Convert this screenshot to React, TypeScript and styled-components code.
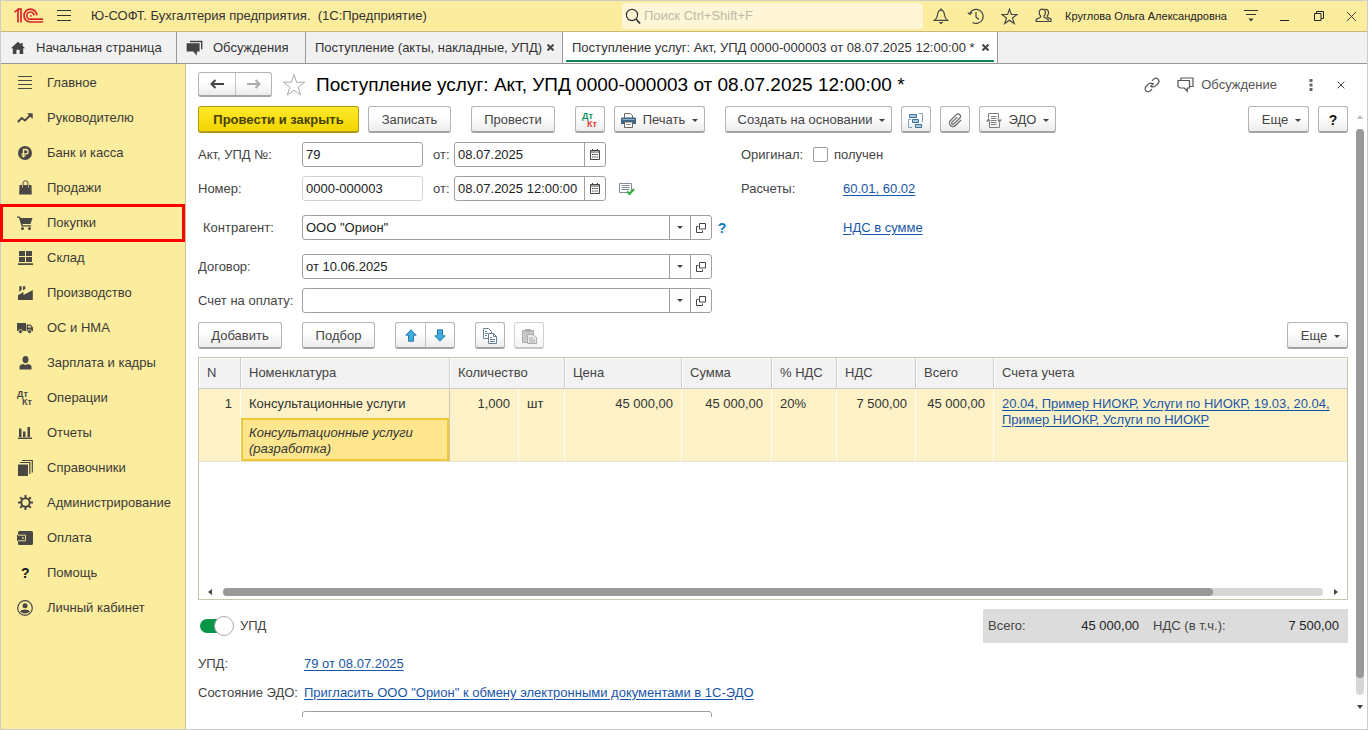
import React from "react";
import styled, { createGlobalStyle, css } from "styled-components";

const GlobalStyle = createGlobalStyle`
  *, *::before, *::after { box-sizing: border-box; }
  body { margin: 0; }
  body, button, input {
    font-family: "Liberation Sans", Arial, sans-serif;
    font-size: 13px;
    line-height: 16px;
    color: #444;
  }
  button { cursor: pointer; }
  svg { display: block; flex: none; }
`;

/* ---------- frame ---------- */

const Window = styled.div`
  display: flex;
  flex-direction: column;
  height: 100vh;
  border: 1px solid #ccc;
  background: #fff;
`;

const TitleBar = styled.header`
  display: flex;
  align-items: center;
  flex: none;
  height: 31px;
  padding: 0 1px 0 13px;
  background: #fbec9e;
  border-bottom: 1px solid #c9b878;
`;

const AppTitle = styled.div`
  flex: 1;
  min-width: 0;
  padding-left: 7px;
  color: #333;
  white-space: pre;
  overflow: hidden;
`;

const IconButton = styled.button<{ $w?: number }>`
  display: flex;
  align-items: center;
  justify-content: center;
  width: ${(p) => p.$w ?? 34}px;
  height: 28px;
  padding: 0;
  border: 0;
  background: none;
  color: #444;
  flex: none;
`;

const SearchBox = styled.label`
  display: flex;
  align-items: center;
  gap: 3px;
  width: 301px;
  height: 26px;
  padding-left: 3px;
  background: #fef6d6;
  border-radius: 3px;
  margin-right: 1px;
`;

const SearchInput = styled.input`
  flex: 1;
  min-width: 0;
  border: 0;
  padding: 0;
  background: none;
  outline: none;
  &::placeholder { color: #bdb9a8; opacity: 1; }
`;

const UserLink = styled.button`
  flex: none;
  width: 174px;
  padding: 0 0 0 5px;
  border: 0;
  background: none;
  font-size: 11px;
  color: #222;
  text-align: left;
  white-space: nowrap;
`;

/* ---------- tabs ---------- */

const TabBar = styled.nav`
  display: flex;
  flex: none;
  height: 32px;
  background: #f1f1f1;
  border-bottom: 1px solid #999;
`;

const Tab = styled.div<{ $active?: boolean; $w: number }>`
  position: relative;
  display: flex;
  align-items: center;
  min-width: ${(p) => p.$w}px;
  padding: 0 7px 0 9px;
  border-right: 1px solid #999;
  background: ${(p) => (p.$active ? "#fff" : "transparent")};
  ${(p) =>
    p.$active &&
    css`
      &::after {
        content: "";
        position: absolute;
        left: 3px;
        right: 3px;
        bottom: 1px;
        height: 2px;
        background: #128354;
      }
    `}
`;

const TabLabel = styled.button`
  display: flex;
  align-items: center;
  gap: 10px;
  flex: 1;
  padding: 0;
  border: 0;
  background: none;
  color: #333;
  white-space: nowrap;
`;

const TabClose = styled.button`
  padding: 0;
  border: 0;
  width: 10px;
  background: none;
  color: #444;
  display: flex;
  justify-content: center;
`;

/* ---------- side menu ---------- */

const Body = styled.div`
  display: flex;
  flex: 1;
  min-height: 0;
`;

const Sidebar = styled.nav`
  flex: none;
  width: 185px;
  padding-top: 1px;
  background: #fbec9e;
  border-right: 1px solid #c9c2a0;
`;

const MenuItem = styled.a<{ $marked?: boolean }>`
  position: relative;
  display: flex;
  align-items: center;
  gap: 14px;
  height: 35px;
  padding-left: 16px;
  color: #3b3a36;
  text-decoration: none;
  white-space: nowrap;
  ${(p) =>
    p.$marked &&
    css`
      &::after {
        content: "";
        position: absolute;
        inset: -1px 0 -2px -1px;
        border: 3px solid #f00;
      }
    `}
`;

const IconSlot = styled.span`
  display: flex;
  justify-content: center;
  width: 16px;
  color: #4a4844;
`;

/* ---------- document ---------- */

const Main = styled.main`
  display: flex;
  flex-direction: column;
  flex: 1;
  min-width: 0;
  padding: 8px 3px 12px 12px;
`;

const DocHeader = styled.div`
  display: flex;
  align-items: center;
  flex: none;
  height: 25px;
  margin-bottom: 9px;
  padding-right: 10px;
`;

const raised = css`
  border: 1px solid #b3b3b3;
  border-bottom: 2px solid #a3a3a3;
  border-radius: 3px;
  background: linear-gradient(#fff 40%, #ececec);
  color: #444;
`;

const SplitGroup = styled.div<{ $h: number }>`
  ${raised}
  display: flex;
  height: ${(p) => p.$h}px;
`;

const SplitButton = styled.button<{ $w: number }>`
  display: flex;
  align-items: center;
  justify-content: center;
  width: ${(p) => p.$w}px;
  padding: 0;
  border: 0;
  background: none;
  & + & { border-left: 1px solid #c4c4c4; }
`;

const DocTitle = styled.h1`
  flex: 1;
  margin: 0;
  font-size: 19px;
  line-height: 24px;
  font-weight: 400;
  color: #000;
  white-space: nowrap;
`;

const DiscussButton = styled.button`
  display: flex;
  align-items: center;
  gap: 7px;
  padding: 0;
  margin: 0 17px 0 8px;
  border: 0;
  background: none;
  color: #555;
`;

const Work = styled.div`
  display: flex;
  flex: 1;
  min-height: 0;
`;

const Form = styled.form`
  display: flex;
  flex-direction: column;
  flex: 1;
  min-width: 0;
  overflow: hidden;
`;

const Toolbar = styled.div`
  display: flex;
  flex: none;
  gap: 20px;
  height: 28px;
`;

const ToolGroup = styled.div<{ $end?: boolean }>`
  display: flex;
  gap: 9px;
  height: 27px;
  margin-left: ${(p) => (p.$end ? "auto" : "0")};
`;

const Button = styled.button<{ $w: number; $primary?: boolean; $menu?: boolean }>`
  ${raised}
  display: flex;
  align-items: center;
  justify-content: center;
  gap: 7px;
  width: ${(p) => p.$w}px;
  height: 27px;
  padding: 2px 0 0 ${(p) => (p.$menu ? 6 : 0)}px;
  white-space: nowrap;
  ${(p) =>
    p.$primary &&
    css`
      border-color: #b09a10;
      background: linear-gradient(#ffe92b, #f2d500);
      color: #463f00;
      font-weight: 700;
    `}
  &:disabled { opacity: 0.6; cursor: default; }
`;

const QuestionMark = styled.b`
  font-size: 14px;
  color: #111;
`;

const Caret = styled.span`
  border: 3px solid transparent;
  border-top-color: #444;
  border-bottom: 0;
`;

const Fields = styled.div`
  display: flex;
  flex-direction: column;
  gap: 9px;
  flex: none;
  padding: 8px 0 9px;
`;

const FieldBlock = styled.div`
  padding: 5px 0;
`;

const Row = styled.div`
  display: flex;
  align-items: center;
  height: 25px;
`;

const RowMain = styled.div`
  display: flex;
  align-items: center;
  width: 543px;
`;

const Label = styled.label<{ $w: number; $indent?: boolean }>`
  flex: none;
  width: ${(p) => p.$w}px;
  padding-left: ${(p) => (p.$indent ? 5 : 0)}px;
  white-space: nowrap;
`;

const FieldFrame = styled.div<{ $w: number; $readonly?: boolean }>`
  display: flex;
  flex: none;
  width: ${(p) => p.$w}px;
  height: 25px;
  border: 1px solid ${(p) => (p.$readonly ? "#d2d2d2" : "#a0a0a0")};
  border-radius: 3px;
  background: #fff;
`;

const TextInput = styled.input`
  flex: 1;
  min-width: 0;
  padding: 0 3px;
  border: 0;
  background: none;
  outline: none;
  color: #222;
`;

const FieldButton = styled.button`
  display: flex;
  align-items: center;
  justify-content: center;
  width: 21px;
  padding: 0;
  border: 0;
  border-left: 1px solid #a0a0a0;
  background: none;
`;

const FromLabel = styled.label`
  width: 31px;
  padding-left: 10px;
`;

const PostedMark = styled.span`
  margin-left: 13px;
`;

const Link = styled.a`
  color: #1a56a8;
  text-decoration: underline;
  text-underline-offset: 2px;
`;

const HelpLink = styled.button`
  margin-left: 5px;
  padding: 0;
  width: 10px;
  border: 0;
  background: none;
  color: #0d78b8;
  font-size: 14px;
  font-weight: 700;
`;

const CheckBox = styled.input`
  appearance: none;
  width: 15px;
  height: 15px;
  margin: 0 6px 0 0;
  border: 1px solid #999;
  border-radius: 2px;
  background: #fff;
`;

/* ---------- table ---------- */

const TableFrame = styled.div`
  display: flex;
  flex-direction: column;
  flex: none;
  min-height: 243px;
  margin-top: 7px;
  border: 1px solid #c8c6ae;
`;

const Grid = styled.table`
  width: 100%;
  table-layout: fixed;
  border-collapse: separate;
  border-spacing: 0;
`;

const Th = styled.th`
  height: 31px;
  padding: 0 8px 1px;
  background: #f2f2f2;
  border-right: 1px solid #ccc;
  border-bottom: 1px solid #ccc;
  box-shadow: inset 1px 1px 0 #fff;
  font-weight: 400;
  text-align: left;
  white-space: nowrap;
  &:last-child { border-right: 0; }
`;

const Td = styled.td<{ $right?: boolean }>`
  padding: 7px 8px 6px;
  vertical-align: top;
  background: #fdf2c7;
  border-right: 1px solid #fffdf4;
  border-bottom: 1px solid #e9e2cc;
  color: #333;
  text-align: ${(p) => (p.$right ? "right" : "left")};
  overflow: hidden;
  &:last-child { border-right: 0; }
`;

const NameTd = styled(Td)`
  height: 29px;
  border-bottom: 0;
  border-right-color: #cfc9b4;
  white-space: nowrap;
`;

const ContentTd = styled(Td)`
  height: 44px;
  padding: 0;
  &:last-child { border-right: 1px solid #cfc9b4; }
`;

const SelectedCell = styled.div`
  height: 43px;
  padding: 5px 6px;
  border: 2px solid #f0c938;
  background: #fde68e;
  font-style: italic;
`;

const HScroll = styled.div`
  display: flex;
  align-items: center;
  gap: 11px;
  height: 15px;
  margin-top: auto;
  padding: 0 9px;
`;

const Track = styled.div<{ $vertical?: boolean }>`
  display: flex;
  flex: 1;
  flex-direction: ${(p) => (p.$vertical ? "column" : "row")};
  ${(p) => (p.$vertical ? "width: 8px;" : "height: 8px;")}
  border-radius: 4px;
  background: #d6d6d6;
`;

const Thumb = styled.div<{ $size: string }>`
  flex: 0 0 ${(p) => p.$size};
  border-radius: 4px;
  background: #999;
`;

const VScroll = styled.div`
  display: flex;
  flex-direction: column;
  align-items: center;
  gap: 10px;
  width: 8px;
  margin-left: 8px;
  padding: 9px 0 8px;
`;

const Arrow = styled.span<{ $dir: "up" | "down" | "left" | "right"; $faint?: boolean }>`
  width: 0;
  height: 0;
  border: 3px solid transparent;
  ${(p) => {
    const side = { up: "bottom", down: "top", left: "right", right: "left" }[p.$dir];
    const other = { up: "top", down: "bottom", left: "left", right: "right" }[p.$dir];
    return `border-${side}: 4px solid ${p.$faint ? "#bbb" : "#444"}; border-${other}-width: 0;`;
  }}
`;

/* ---------- footer ---------- */

const SummaryRow = styled.div`
  display: flex;
  align-items: center;
  justify-content: space-between;
  flex: none;
  height: 34px;
  margin: 9px 0 8px;
`;

const SwitchLabel = styled.label`
  display: flex;
  align-items: center;
  gap: 7px;
  padding-left: 2px;
`;

const Switch = styled.input`
  appearance: none;
  position: relative;
  width: 33px;
  height: 14px;
  margin: 0;
  border-radius: 7px;
  background: #0a9648;
  &::after {
    content: "";
    position: absolute;
    right: -1px;
    top: -3px;
    width: 20px;
    height: 20px;
    border: 1px solid #aaa;
    border-radius: 50%;
    background: #fff;
  }
`;

const Totals = styled.dl`
  display: flex;
  align-items: center;
  width: 365px;
  height: 34px;
  margin: 0;
  padding: 0 9px 0 5px;
  background: #dcdcdc;
  white-space: nowrap;
`;

const TotalValue = styled.dd`
  flex: 1;
  margin: 0;
  text-align: right;
  color: #222;
  & + dt { margin-left: 14px; }
`;

const InfoRow = styled.div`
  display: flex;
  align-items: center;
  flex: none;
  height: 25px;
  margin-bottom: 4px;
`;

const Comment = styled.div`
  flex: none;
  margin: 2px 0 0 104px;
  height: 25px;
`;

/* ---------- icons ---------- */

const stroke = { fill: "none", stroke: "currentColor", strokeWidth: 1.2 } as const;

const Logo = () => (
  <svg width="30" height="16" viewBox="0 0 30 16" fill="none" stroke="#d9262c" strokeWidth="1.7">
    <path d="M.4 4.2 4 1.400v13M3.800 1.200h3.200v13.200" />
    <path d="M22.800 7.400A6.400 6.400 0 1 0 16.400 14H29.200" />
    <path d="M20 7.400a3.600 3.600 0 1 0-3.600 3.800H29.200" />
    <path d="M16.200 7.800h1.400" />
  </svg>
);

const Burger = () => (
  <svg width="14" height="12" viewBox="0 0 14 12" stroke="#333" strokeWidth="1">
    <path d="M0 .5h14M0 5.500h14M0 10.500h14" />
  </svg>
);

const SearchIcon = () => (
  <svg width="16" height="17" viewBox="0 0 16 17" {...stroke} stroke="#333">
    <circle cx="7" cy="7" r="5.6" />
    <path d="m11 11 4 4.500" strokeWidth="1.8" />
  </svg>
);

const Bell = () => (
  <svg width="16" height="18" viewBox="0 0 16 18" {...stroke}>
    <path d="M8 1.200v1.600M8 2.800C5 3.200 4.700 5.600 4.500 8 4.300 10.500 3.200 12 1.400 13.400h13.200C12.800 12 11.700 10.500 11.500 8 11.300 5.600 11 3.200 8 2.800Z" />
    <path d="M5.600 15h4.800L8 17.200Z" fill="currentColor" stroke="none" />
  </svg>
);

const History = () => (
  <svg width="17" height="17" viewBox="0 0 17 17" {...stroke}>
    <path d="M3 5A7 7 0 1 1 5.500 14.400" />
    <path d="M.8 4.500 3 6.400 5 4" />
    <path d="M9 4v5l3 2.500" />
  </svg>
);

const STAR = "m12 1.500 2.600 7.700h8.200l-6.600 4.900 2.500 7.900L12 17.200 5.300 22l2.500-7.900L1.200 9.200h8.200Z";

const StarIcon = ({ size, color, width }: { size: number; color: string; width: number }) => (
  <svg width={size} height={size} viewBox="0 0 24 24" fill="none" stroke={color} strokeWidth={width}>
    <path d={STAR} />
  </svg>
);

const People = () => (
  <svg width="17" height="16" viewBox="0 0 17 16" {...stroke}>
    <path d="M7.200 1.200c-2 0-3 1.400-3 3.200 0 1.500.6 2.800 1.400 3.500v1.300L1.200 11.400V13.500h12V11.400L9 9.200V7.900c.8-.7 1.400-2 1.400-3.500 0-1.800-1.200-3.200-3.200-3.200Z" />
    <path d="M9.800 1.400c2.400-.4 3.700 1 3.700 3 0 1.500-.5 2.600-1.300 3.400v1.200l3.800 2.200v2.300h-2" />
  </svg>
);

const PanelMenu = () => (
  <svg width="16" height="14" viewBox="0 0 16 14" stroke="#333">
    <path d="M1 1.500h14M3 5.500h10" />
    <path d="M5.500 9.500h5L8 12.500Z" fill="#333" stroke="none" />
  </svg>
);

const Minimize = () => (
  <svg width="10" height="12" viewBox="0 0 10 12" stroke="#222"><path d="M0 10.500h9" /></svg>
);

const Restore = () => (
  <svg width="10" height="10" viewBox="0 0 10 10" fill="none" stroke="#222">
    <path d="M.5 2.500h6.500v7H.5ZM2.500 2.500v-2h7v7H7" />
  </svg>
);

const Cross = ({ size, width = 1 }: { size: number; width?: number }) => (
  <svg width={size} height={size} viewBox="0 0 10 10" stroke="#444" strokeWidth={(width * 10) / size}>
    <path d="m.8.8 8.400 8.400M9.200.8.8 9.200" />
  </svg>
);

const Home = () => (
  <svg width="16" height="14" viewBox="0 0 16 14" fill="#444">
    <path d="M8 .8.8 7.200h2v5.800h3.600V8.800h3.200V13h3.600V7.200h2L12.600 4.800V2h-1.800v1.300Z" />
  </svg>
);

const ChatFilled = () => (
  <svg width="17" height="16" viewBox="0 0 17 16" fill="#444">
    <path d="M4 .8h12.400v8.400H15V2.300H4Z" />
    <path d="M.6 3.200h13v8.400H11L10.600 15.400 7.200 11.600H.6Z" />
  </svg>
);

const Chat = () => (
  <svg width="17" height="16" viewBox="0 0 17 16" {...stroke} stroke="#555">
    <path d="M1 3.500h11.500v7.500h-2.200v3.200L7.300 11H3.200L1 9.500Z" />
    <path d="M4 3.200V1h12v8.500h-3" />
  </svg>
);

const ChainLink = () => (
  <svg width="16" height="16" viewBox="0 0 24 24" fill="none" stroke="#555" strokeWidth="1.800">
    <path d="M10.500 13.500a5 5 0 0 0 6.500.2l4-4a4.500 4.500 0 0 0-6.500-6.400l-2.600 2.500" />
    <path d="M13.500 10.500a5 5 0 0 0-6.500-.2l-4 4a4.500 4.500 0 0 0 6.500 6.400l2.600-2.500" />
    <path d="m9.500 14.500 5-5" />
  </svg>
);

const ArrowIcon = ({ flip }: { flip?: boolean }) => (
  <svg width="14" height="10" viewBox="0 0 14 10" fill="none" stroke={flip ? "#aaa" : "#444"} strokeWidth="2">
    <path d={flip ? "M0 5h12M8.500 1l4 4-4 4" : "M14 5H2M5.500 1l-4 4 4 4"} />
  </svg>
);

const BlueArrow = ({ down }: { down?: boolean }) => (
  <svg width="12" height="13" viewBox="0 0 12 13" fill="#3fabe0" stroke="#2a7ba8">
    <path d={down ? "M6 12.300 11.200 6.800H8.500V.8h-5v6H.8Z" : "M6 .7.8 6.200h2.700v6h5v-6h2.700Z"} />
  </svg>
);

const DtKt = ({ colored }: { colored?: boolean }) => (
  <svg width="18" height="18" viewBox="0 0 18 18" fontFamily="Liberation Sans, Arial, sans-serif" fontSize="9" fontWeight="700">
    <text x="1" y="8" fill={colored ? "#12925a" : "#4a4844"}>Дт</text>
    <text x="6" y="16" fill={colored ? "#d9413c" : "#4a4844"}>Кт</text>
  </svg>
);

const Printer = () => (
  <svg width="15" height="15" viewBox="0 0 15 15">
    <path d="M3.500 5V.6h6L11.500 2.600V5" fill="#fff" stroke="#666" />
    <path d="M0 5.500Q0 4.500 1 4.500h13q1 0 1 1V11H0Z" fill="#3e6486" />
    <path d="M1.500 6.500h12" stroke="#8fb0cc" />
    <path d="M3.500 9h8v5.500h-8Z" fill="#fff" stroke="#666" />
    <path d="M5 11.500h5" stroke="#999" />
  </svg>
);

const Structure = () => (
  <svg width="16" height="15" viewBox="0 0 16 15" fill="#a9cbe6" stroke="#3f7396">
    <path d="M1.500 1.500h7v3h-7ZM4.500 6.500h6v3h-6ZM7.500 11.500h6v3h-6Z" />
    <path d="M11 .5h3.500V9M3 6.500H.5V14.500H4" fill="none" stroke="#7fa3bd" />
  </svg>
);

const Clip = () => (
  <svg width="15" height="15" viewBox="0 0 24 24" fill="none" stroke="#666" strokeWidth="1.900">
    <path d="m21 11-9 9a5.600 5.600 0 0 1-8-8l9.500-9.500a3.900 3.900 0 0 1 5.500 5.500l-9.500 9.500a2 2 0 0 1-3-3L15 6.500" />
  </svg>
);

const Exchange = () => (
  <svg width="16" height="15" viewBox="0 0 16 15" fill="none" stroke="#808080">
    <path d="M2.500 5V.5h10V6M13.500 10v4.500h-10V9M5 3.500h5.500M5 5.500h5.500M5 7.500h5.500M5 9.500h5.500M5 11.500h5.500" />
    <path d="M0 8.500 2.500 5l2.500 3.500ZM11 6.500h5L13.500 10Z" fill="#808080" stroke="none" />
  </svg>
);

const Calendar = () => (
  <svg width="10" height="11" viewBox="0 0 10 11" fill="none" stroke="#444">
    <path d="M.5 1.500h9v9h-9ZM.5 3h9" />
    <path d="M2.500 0v2M7.500 0v2M2 5.500h1.500M4.300 5.500h1.500M6.600 5.500h1.500M2 8h1.500M4.300 8h1.500M6.600 8h1.500" />
  </svg>
);

const OpenIcon = () => (
  <svg width="10" height="10" viewBox="0 0 10 10" fill="none" stroke="#444">
    <path d="M3.500.5h6v5.500h-6Z" />
    <path d="M2.500 3.500h-2v6h6v-2" />
  </svg>
);

const Posted = () => (
  <svg width="16" height="14" viewBox="0 0 16 14" fill="none" stroke="#7f8c99">
    <path d="M.5 1.500h12v9H.5Z" fill="#fff" />
    <path d="M2.500 3.500h8M2.500 5.500h8M2.500 7.500h8" />
    <path d="m8 9.500 2.500 2.500 4.500-5" stroke="#2fae3c" strokeWidth="2.200" />
  </svg>
);

const CopyIcon = () => (
  <svg width="16" height="16" viewBox="0 0 16 16" fill="#fff" stroke="#6a7f92">
    <path d="M1.500.5h5l3 3v7h-8Z" />
    <path d="M6.500 5.500h5l3 3v7h-8Z" />
    <path d="M11.500 5.500v3h3M3 3.500h2M3 5.500h3M3 7.500h2M8 9.500h2M8 11.500h5M8 13.500h5" fill="none" />
  </svg>
);

const PasteIcon = () => (
  <svg width="15" height="15" viewBox="0 0 15 15" stroke="#777">
    <path d="M.5 1.500h11v12H.5Z" fill="#a5a5a5" />
    <path d="M3.500.5h5v2h-5Z" fill="#777" />
    <path d="M5.500 5.500h5l4 3v6h-9Z" fill="#ddd" />
    <path d="M7 9h4M7 11h6M7 13h6" />
  </svg>
);

const menuIcons: Record<string, React.ReactNode> = {
  main: (
    <svg width="14" height="14" viewBox="0 0 14 14" stroke="currentColor"><path d="M0 .5h14M0 4.500h14M0 8.500h14M0 12.500h14" /></svg>
  ),
  trend: (
    <svg width="16" height="10" viewBox="0 0 16 10" fill="none" stroke="currentColor" strokeWidth="2">
      <path d="m.8 9 4-4L8 7.500l5-5" /><path d="M10 .3h5.700V6Z" fill="currentColor" stroke="none" />
    </svg>
  ),
  ruble: (
    <svg width="14" height="14" viewBox="0 0 14 14">
      <circle cx="7" cy="7" r="7" fill="currentColor" />
      <path d="M5.500 11.500v-8H8q2 0 2 2.200t-2 2.200H3.500M3.500 9.800h4" fill="none" stroke="#fbec9e" strokeWidth="1.300" />
    </svg>
  ),
  bag: (
    <svg width="13" height="15" viewBox="0 0 13 15">
      <path d="M.5 5h12l.3 9.500H.2Z" fill="currentColor" />
      <path d="M4 7.500V3.200Q4 .8 6.500.8T9 3.200v4.300" fill="none" stroke="currentColor" />
      <path d="M3.500 5v2.500M9.500 5v2.500" stroke="#fbec9e" strokeWidth=".7" />
    </svg>
  ),
  cart: (
    <svg width="16" height="14" viewBox="0 0 16 14" fill="currentColor">
      <path d="M0 .5h3l.6 1.500h12L13.500 8H5.400l.4 1.200h8.400v1.300H4.600L2 1.800H0Z" />
      <circle cx="5.500" cy="12.500" r="1.500" /><circle cx="12.500" cy="12.500" r="1.500" />
    </svg>
  ),
  stock: (
    <svg width="15" height="14" viewBox="0 0 15 14" fill="currentColor"><path d="M1 0h6v5H1ZM8 0h6v5H8ZM1 6h6v5H1ZM8 6h6v5H8ZM0 12.200h15V14H0Z" /></svg>
  ),
  factory: (
    <svg width="15" height="14" viewBox="0 0 15 14" fill="currentColor"><path d="M0 14V9.200L5.500 6v3L14.800 4v10ZM1.300.3h2.400v3.500L1.300 6ZM5 .3h2.300V3L5 4.200Z" /></svg>
  ),
  truck: (
    <svg width="16" height="12" viewBox="0 0 16 12">
      <path d="M0 1h9v8H0ZM9.600 2.500h4L16 5.500V9.200H9.600Z" fill="currentColor" />
      <path d="M11 3.800h2.200l1.200 1.800H11Z" fill="#fbec9e" />
      <circle cx="3.500" cy="9.500" r="2" fill="currentColor" stroke="#fbec9e" strokeWidth=".7" />
      <circle cx="12.500" cy="9.500" r="2" fill="currentColor" stroke="#fbec9e" strokeWidth=".7" />
    </svg>
  ),
  person: (
    <svg width="13" height="14" viewBox="0 0 13 14" fill="currentColor">
      <ellipse cx="6.500" cy="3.600" rx="3" ry="3.600" /><path d="M.5 13.500v-3Q.5 8.800 4 8l2.500 1L9 8q3.500.8 3.500 2.500v3Z" />
    </svg>
  ),
  dtkt: <DtKt />,
  chart: (
    <svg width="14" height="12" viewBox="0 0 14 12" fill="currentColor"><path d="M0 10.500h14V12H0ZM1 1.500h2.500V10H1ZM5 4.500h2.500V10H5ZM9.500 0H12v10H9.500Z" /></svg>
  ),
  books: (
    <svg width="15" height="16" viewBox="0 0 15 16">
      <path d="M0 4.500h10V16H0Z" fill="currentColor" /><path d="M2 2.500h9.800V14M4 .5h10.300V12.500" fill="none" stroke="currentColor" strokeWidth="1.200" />
    </svg>
  ),
  gear: (
    <svg width="15" height="15" viewBox="0 0 15 15" fill="none" stroke="currentColor" strokeWidth="2">
      <circle cx="7.500" cy="7.500" r="4.200" />
      <path d="M7.500 0v3M7.500 12v3M0 7.500h3M12 7.500h3M2.200 2.200l2 2M10.800 10.800l2 2M2.200 12.800l2-2M10.800 4.200l2-2" />
    </svg>
  ),
  wallet: (
    <svg width="16" height="14" viewBox="0 0 16 14">
      <path d="M2.500 0h12Q16 0 16 1.500v11q0 1.500-1.500 1.500h-12Q1 14 1 12.500V10H0V4h1V1.500Q1 0 2.500 0Z" fill="currentColor" />
      <path d="M1 4.200h7.500v5.600H1" fill="none" stroke="#fbec9e" strokeWidth=".9" /><path d="M5 6.200h1.600v1.600H5Z" fill="#fbec9e" />
    </svg>
  ),
  help: (
    <svg width="12" height="16" viewBox="0 0 12 16" fontFamily="Liberation Sans, Arial, sans-serif" fontSize="14" fontWeight="700">
      <text x="2" y="13" fill="#111">?</text>
    </svg>
  ),
  account: (
    <svg width="16" height="16" viewBox="0 0 16 16">
      <circle cx="8" cy="8" r="7.300" fill="none" stroke="currentColor" strokeWidth="1.200" />
      <circle cx="8" cy="5.800" r="2.500" fill="currentColor" /><path d="M3.200 11.800Q4 9.500 8 9.500t4.800 2.300Q10.500 13.500 8 13.500t-4.800-1.700Z" fill="currentColor" />
    </svg>
  ),
};

const menu: [string, string][] = [
  ["main", "Главное"],
  ["trend", "Руководителю"],
  ["ruble", "Банк и касса"],
  ["bag", "Продажи"],
  ["cart", "Покупки"],
  ["stock", "Склад"],
  ["factory", "Производство"],
  ["truck", "ОС и НМА"],
  ["person", "Зарплата и кадры"],
  ["dtkt", "Операции"],
  ["chart", "Отчеты"],
  ["books", "Справочники"],
  ["gear", "Администрирование"],
  ["wallet", "Оплата"],
  ["help", "Помощь"],
  ["account", "Личный кабинет"],
];

/* ---------- composed fields ---------- */

const DateField = ({ id, value }: { id: string; value: string }) => (
  <>
    <FromLabel htmlFor={id}>от:</FromLabel>
    <FieldFrame $w={152}>
      <TextInput id={id} defaultValue={value} />
      <FieldButton type="button" aria-label="Выбрать дату"><Calendar /></FieldButton>
    </FieldFrame>
  </>
);

const RefField = ({ id, label, value, indent }: { id: string; label: string; value: string; indent?: boolean }) => (
  <>
    <Label htmlFor={id} $w={104} $indent={indent}>{label}</Label>
    <FieldFrame $w={410}>
      <TextInput id={id} defaultValue={value} />
      <FieldButton type="button" aria-label="Показать список"><Caret /></FieldButton>
      <FieldButton type="button" aria-label="Открыть"><OpenIcon /></FieldButton>
    </FieldFrame>
  </>
);

const columnWidths = [42, 209, 69, 46, 117, 90, 65, 79, 78];

export default function App() {
  return (
    <Window>
      <GlobalStyle />
      <TitleBar>
        <Logo />
        <IconButton $w={40} aria-label="Меню"><Burger /></IconButton>
        <AppTitle>{"Ю-СОФТ. Бухгалтерия предприятия.  (1С:Предприятие)"}</AppTitle>
        <SearchBox>
          <SearchIcon />
          <SearchInput placeholder="Поиск Ctrl+Shift+F" aria-label="Поиск" />
        </SearchBox>
        <IconButton aria-label="Уведомления"><Bell /></IconButton>
        <IconButton aria-label="История"><History /></IconButton>
        <IconButton aria-label="Избранное"><StarIcon size={17} color="#444" width={1.6} /></IconButton>
        <IconButton aria-label="Пользователи"><People /></IconButton>
        <UserLink>Круглова Ольга Александровна</UserLink>
        <IconButton aria-label="Сервис"><PanelMenu /></IconButton>
        <IconButton aria-label="Свернуть"><Minimize /></IconButton>
        <IconButton aria-label="Восстановить"><Restore /></IconButton>
        <IconButton $w={30} aria-label="Закрыть"><Cross size={11} /></IconButton>
      </TitleBar>

      <TabBar>
        <Tab $w={176}><TabLabel><Home />Начальная страница</TabLabel></Tab>
        <Tab $w={129}><TabLabel><ChatFilled />Обсуждения</TabLabel></Tab>
        <Tab $w={257}>
          <TabLabel>Поступление (акты, накладные, УПД)</TabLabel>
          <TabClose aria-label="Закрыть вкладку"><Cross size={7} width={2} /></TabClose>
        </Tab>
        <Tab $w={435} $active>
          <TabLabel>Поступление услуг: Акт, УПД 0000-000003 от 08.07.2025 12:00:00 *</TabLabel>
          <TabClose aria-label="Закрыть вкладку"><Cross size={7} width={2} /></TabClose>
        </Tab>
      </TabBar>

      <Body>
        <Sidebar>
          {menu.map(([icon, label]) => (
            <MenuItem key={icon} href="#" $marked={icon === "cart"}>
              <IconSlot>{menuIcons[icon]}</IconSlot>
              {label}
            </MenuItem>
          ))}
        </Sidebar>

        <Main>
          <DocHeader>
            <SplitGroup $h={25}>
              <SplitButton $w={36} aria-label="Назад"><ArrowIcon /></SplitButton>
              <SplitButton $w={36} aria-label="Вперед"><ArrowIcon flip /></SplitButton>
            </SplitGroup>
            <IconButton $w={44} aria-label="В избранное"><StarIcon size={24} color="#aaa" width={1} /></IconButton>
            <DocTitle>Поступление услуг: Акт, УПД 0000-000003 от 08.07.2025 12:00:00 *</DocTitle>
            <IconButton aria-label="Ссылка"><ChainLink /></IconButton>
            <DiscussButton><Chat />Обсуждение</DiscussButton>
            <IconButton aria-label="Еще">
              <svg width="4" height="12" viewBox="0 0 4 12" fill="#666"><path d="M.5 0h3v3h-3ZM.5 4.500h3v3h-3ZM.5 9h3v3h-3Z" /></svg>
            </IconButton>
            <IconButton $w={26} aria-label="Закрыть"><Cross size={8} /></IconButton>
          </DocHeader>

          <Work>
            <Form onSubmit={(e) => e.preventDefault()}>
              <Toolbar>
                <ToolGroup>
                  <Button $w={161} $primary>Провести и закрыть</Button>
                  <Button $w={83} type="button">Записать</Button>
                </ToolGroup>
                <ToolGroup><Button $w={84} type="button">Провести</Button></ToolGroup>
                <ToolGroup>
                  <Button $w={30} type="button" aria-label="Дт Кт"><DtKt colored /></Button>
                  <Button $w={91} type="button"><Printer />Печать<Caret /></Button>
                </ToolGroup>
                <ToolGroup>
                  <Button $w={167} $menu type="button">Создать на основании<Caret /></Button>
                  <Button $w={30} type="button" aria-label="Структура"><Structure /></Button>
                  <Button $w={30} type="button" aria-label="Файлы"><Clip /></Button>
                  <Button $w={77} type="button"><Exchange />ЭДО<Caret /></Button>
                </ToolGroup>
                <ToolGroup $end>
                  <Button $w={61} $menu type="button">Еще<Caret /></Button>
                  <Button $w={30} type="button"><QuestionMark>?</QuestionMark></Button>
                </ToolGroup>
              </Toolbar>

              <Fields>
                <Row>
                  <RowMain>
                    <Label htmlFor="act" $w={104}>Акт, УПД №:</Label>
                    <FieldFrame $w={121}><TextInput id="act" defaultValue="79" /></FieldFrame>
                    <DateField id="actDate" value="08.07.2025" />
                  </RowMain>
                  <Label htmlFor="original" $w={72}>Оригинал:</Label>
                  <CheckBox type="checkbox" id="original" />
                  <label htmlFor="original">получен</label>
                </Row>
                <Row>
                  <RowMain>
                    <Label htmlFor="number" $w={104}>Номер:</Label>
                    <FieldFrame $w={121} $readonly><TextInput id="number" readOnly value="0000-000003" /></FieldFrame>
                    <DateField id="numberDate" value="08.07.2025 12:00:00" />
                    <PostedMark><Posted /></PostedMark>
                  </RowMain>
                  <Label as="span" $w={102}>Расчеты:</Label>
                  <Link href="#">60.01, 60.02</Link>
                </Row>
                <FieldBlock>
                  <Row>
                    <RowMain>
                      <RefField id="partner" label="Контрагент:" value={'ООО "Орион"'} indent />
                      <HelpLink type="button">?</HelpLink>
                    </RowMain>
                    <Label as="span" $w={102} />
                    <Link href="#">НДС в сумме</Link>
                  </Row>
                </FieldBlock>
                <Row><RefField id="contract" label="Договор:" value="от 10.06.2025" /></Row>
                <Row><RefField id="invoice" label="Счет на оплату:" value="" /></Row>
              </Fields>

              <Toolbar>
                <ToolGroup><Button $w={84} type="button">Добавить</Button></ToolGroup>
                <ToolGroup><Button $w={73} type="button">Подбор</Button></ToolGroup>
                <SplitGroup $h={27}>
                  <SplitButton $w={29} type="button" aria-label="Вверх"><BlueArrow /></SplitButton>
                  <SplitButton $w={29} type="button" aria-label="Вниз"><BlueArrow down /></SplitButton>
                </SplitGroup>
                <ToolGroup>
                  <Button $w={30} type="button" aria-label="Копировать"><CopyIcon /></Button>
                  <Button $w={30} type="button" aria-label="Вставить" disabled><PasteIcon /></Button>
                </ToolGroup>
                <ToolGroup $end><Button $w={61} $menu type="button">Еще<Caret /></Button></ToolGroup>
              </Toolbar>

              <TableFrame>
                <Grid>
                  <colgroup>
                    {columnWidths.map((w, i) => <col key={i} width={w} />)}
                    <col />
                  </colgroup>
                  <thead>
                    <tr>
                      <Th>N</Th>
                      <Th>Номенклатура</Th>
                      <Th colSpan={2}>Количество</Th>
                      <Th>Цена</Th>
                      <Th>Сумма</Th>
                      <Th>% НДС</Th>
                      <Th>НДС</Th>
                      <Th>Всего</Th>
                      <Th>Счета учета</Th>
                    </tr>
                  </thead>
                  <tbody>
                    <tr>
                      <Td rowSpan={2} $right>1</Td>
                      <NameTd>Консультационные услуги</NameTd>
                      <Td rowSpan={2} $right>1,000</Td>
                      <Td rowSpan={2}>шт</Td>
                      <Td rowSpan={2} $right>45 000,00</Td>
                      <Td rowSpan={2} $right>45 000,00</Td>
                      <Td rowSpan={2}>20%</Td>
                      <Td rowSpan={2} $right>7 500,00</Td>
                      <Td rowSpan={2} $right>45 000,00</Td>
                      <Td rowSpan={2}>
                        <Link href="#">20.04, Пример НИОКР, Услуги по НИОКР, 19.03, 20.04, Пример НИОКР, Услуги по НИОКР</Link>
                      </Td>
                    </tr>
                    <tr>
                      <ContentTd><SelectedCell>Консультационные услуги (разработка)</SelectedCell></ContentTd>
                    </tr>
                  </tbody>
                </Grid>
                <HScroll>
                  <Arrow $dir="left" />
                  <Track><Thumb $size="90%" /></Track>
                  <Arrow $dir="right" />
                </HScroll>
              </TableFrame>

              <SummaryRow>
                <SwitchLabel><Switch type="checkbox" defaultChecked />УПД</SwitchLabel>
                <Totals>
                  <dt>Всего:</dt>
                  <TotalValue>45 000,00</TotalValue>
                  <dt>НДС (в т.ч.):</dt>
                  <TotalValue>7 500,00</TotalValue>
                </Totals>
              </SummaryRow>

              <InfoRow><Label as="span" $w={106}>УПД:</Label><Link href="#">79 от 08.07.2025</Link></InfoRow>
              <InfoRow>
                <Label as="span" $w={106}>Состояние ЭДО:</Label>
                <Link href="#">Пригласить ООО "Орион" к обмену электронными документами в 1С-ЭДО</Link>
              </InfoRow>
              <Comment><FieldFrame $w={410}><TextInput aria-label="Комментарий" /></FieldFrame></Comment>
            </Form>

            <VScroll>
              <Arrow $dir="up" $faint />
              <Track $vertical><Thumb $size="97%" /></Track>
              <Arrow $dir="down" />
            </VScroll>
          </Work>
        </Main>
      </Body>
    </Window>
  );
}
